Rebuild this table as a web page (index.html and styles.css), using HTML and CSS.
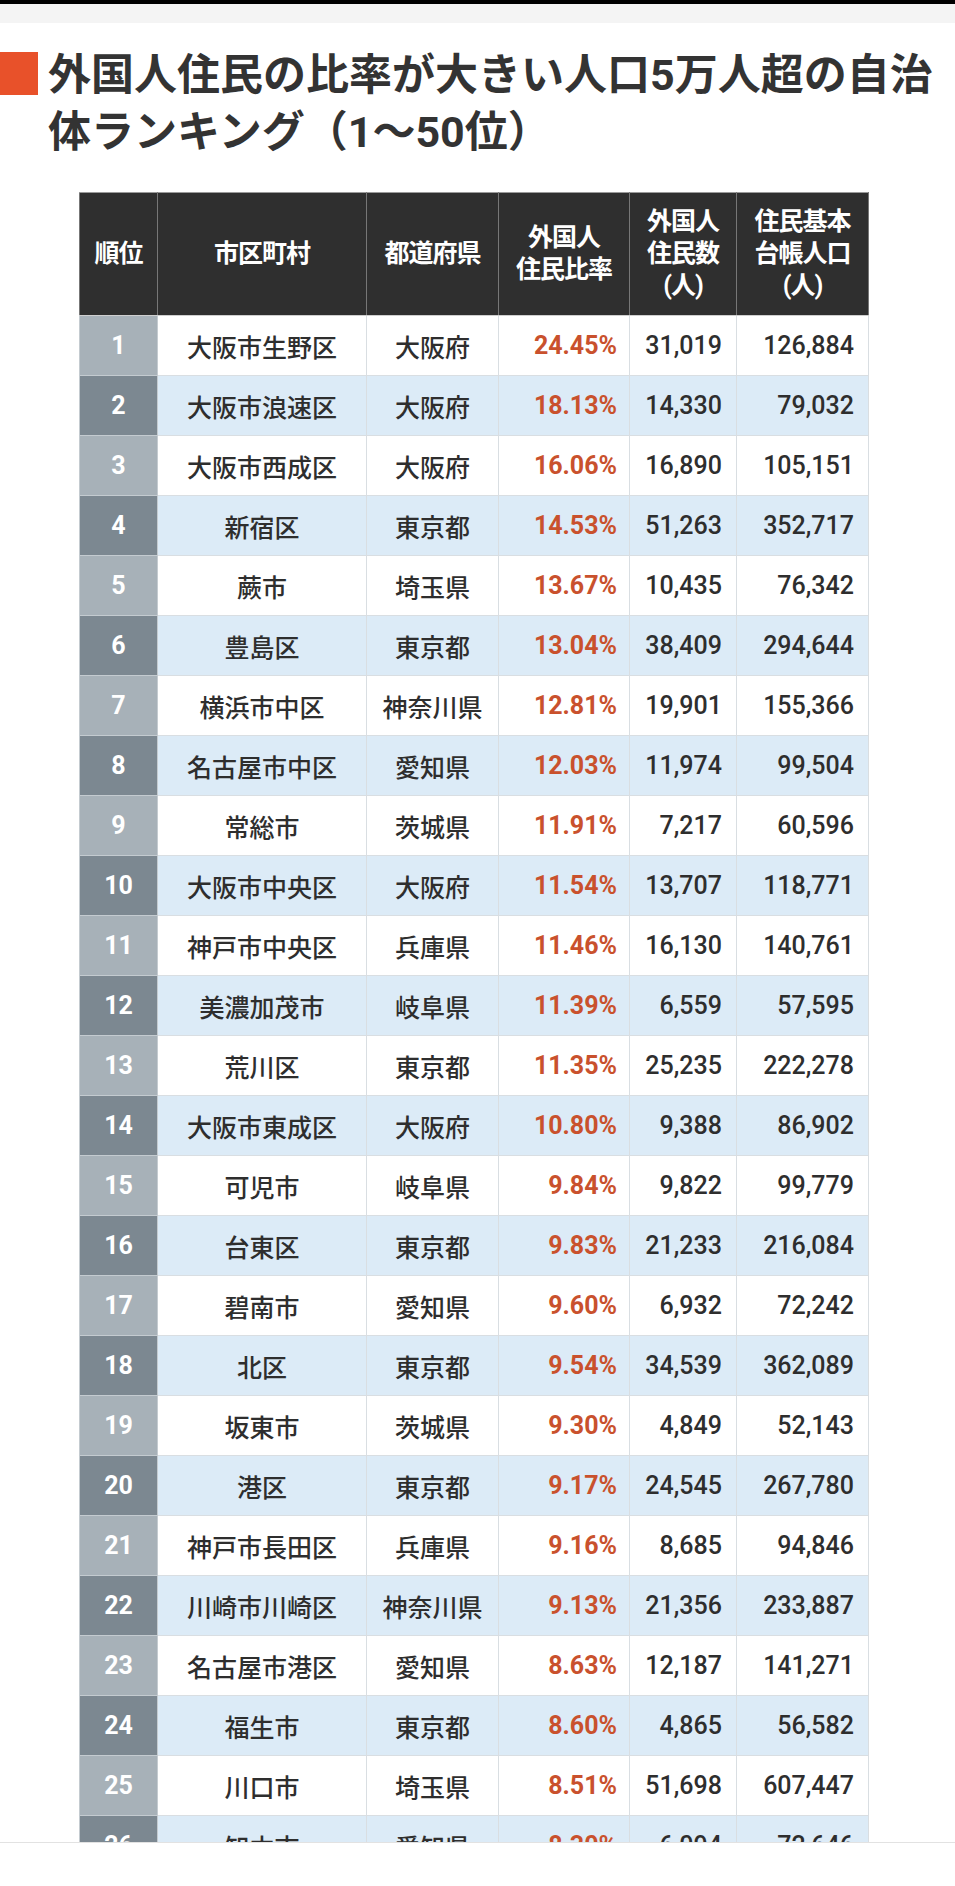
FILE: index.html
```html
<!DOCTYPE html>
<html lang="ja">
<head>
<meta charset="utf-8">
<title>外国人住民の比率が大きい人口5万人超の自治体ランキング</title>
<link rel="stylesheet" href="styles.css">
</head>
<body>
<div class="statusbar"></div>
<div class="topband"></div>
<h1 class="title"><span class="mark"></span><span class="title-text">外国人住民の比率が大きい人口5万人超の自治<br>体ランキング（1〜50位）</span></h1>
<table class="rank">
<colgroup>
<col class="c-rank"><col class="c-city"><col class="c-pref"><col class="c-ratio"><col class="c-num"><col class="c-pop">
</colgroup>
<thead>
<tr><th>順位</th><th>市区町村</th><th>都道府県</th><th>外国人<br>住民比率</th><th>外国人<br>住民数<br>(人)</th><th>住民基本<br>台帳人口<br>(人)</th></tr>
</thead>
<tbody>
<tr><td class="no">1</td><td class="ct">大阪市生野区</td><td class="ct">大阪府</td><td class="pct">24.45%</td><td class="nm">31,019</td><td class="nm">126,884</td></tr>
<tr><td class="no">2</td><td class="ct">大阪市浪速区</td><td class="ct">大阪府</td><td class="pct">18.13%</td><td class="nm">14,330</td><td class="nm">79,032</td></tr>
<tr><td class="no">3</td><td class="ct">大阪市西成区</td><td class="ct">大阪府</td><td class="pct">16.06%</td><td class="nm">16,890</td><td class="nm">105,151</td></tr>
<tr><td class="no">4</td><td class="ct">新宿区</td><td class="ct">東京都</td><td class="pct">14.53%</td><td class="nm">51,263</td><td class="nm">352,717</td></tr>
<tr><td class="no">5</td><td class="ct">蕨市</td><td class="ct">埼玉県</td><td class="pct">13.67%</td><td class="nm">10,435</td><td class="nm">76,342</td></tr>
<tr><td class="no">6</td><td class="ct">豊島区</td><td class="ct">東京都</td><td class="pct">13.04%</td><td class="nm">38,409</td><td class="nm">294,644</td></tr>
<tr><td class="no">7</td><td class="ct">横浜市中区</td><td class="ct">神奈川県</td><td class="pct">12.81%</td><td class="nm">19,901</td><td class="nm">155,366</td></tr>
<tr><td class="no">8</td><td class="ct">名古屋市中区</td><td class="ct">愛知県</td><td class="pct">12.03%</td><td class="nm">11,974</td><td class="nm">99,504</td></tr>
<tr><td class="no">9</td><td class="ct">常総市</td><td class="ct">茨城県</td><td class="pct">11.91%</td><td class="nm">7,217</td><td class="nm">60,596</td></tr>
<tr><td class="no">10</td><td class="ct">大阪市中央区</td><td class="ct">大阪府</td><td class="pct">11.54%</td><td class="nm">13,707</td><td class="nm">118,771</td></tr>
<tr><td class="no">11</td><td class="ct">神戸市中央区</td><td class="ct">兵庫県</td><td class="pct">11.46%</td><td class="nm">16,130</td><td class="nm">140,761</td></tr>
<tr><td class="no">12</td><td class="ct">美濃加茂市</td><td class="ct">岐阜県</td><td class="pct">11.39%</td><td class="nm">6,559</td><td class="nm">57,595</td></tr>
<tr><td class="no">13</td><td class="ct">荒川区</td><td class="ct">東京都</td><td class="pct">11.35%</td><td class="nm">25,235</td><td class="nm">222,278</td></tr>
<tr><td class="no">14</td><td class="ct">大阪市東成区</td><td class="ct">大阪府</td><td class="pct">10.80%</td><td class="nm">9,388</td><td class="nm">86,902</td></tr>
<tr><td class="no">15</td><td class="ct">可児市</td><td class="ct">岐阜県</td><td class="pct">9.84%</td><td class="nm">9,822</td><td class="nm">99,779</td></tr>
<tr><td class="no">16</td><td class="ct">台東区</td><td class="ct">東京都</td><td class="pct">9.83%</td><td class="nm">21,233</td><td class="nm">216,084</td></tr>
<tr><td class="no">17</td><td class="ct">碧南市</td><td class="ct">愛知県</td><td class="pct">9.60%</td><td class="nm">6,932</td><td class="nm">72,242</td></tr>
<tr><td class="no">18</td><td class="ct">北区</td><td class="ct">東京都</td><td class="pct">9.54%</td><td class="nm">34,539</td><td class="nm">362,089</td></tr>
<tr><td class="no">19</td><td class="ct">坂東市</td><td class="ct">茨城県</td><td class="pct">9.30%</td><td class="nm">4,849</td><td class="nm">52,143</td></tr>
<tr><td class="no">20</td><td class="ct">港区</td><td class="ct">東京都</td><td class="pct">9.17%</td><td class="nm">24,545</td><td class="nm">267,780</td></tr>
<tr><td class="no">21</td><td class="ct">神戸市長田区</td><td class="ct">兵庫県</td><td class="pct">9.16%</td><td class="nm">8,685</td><td class="nm">94,846</td></tr>
<tr><td class="no">22</td><td class="ct">川崎市川崎区</td><td class="ct">神奈川県</td><td class="pct">9.13%</td><td class="nm">21,356</td><td class="nm">233,887</td></tr>
<tr><td class="no">23</td><td class="ct">名古屋市港区</td><td class="ct">愛知県</td><td class="pct">8.63%</td><td class="nm">12,187</td><td class="nm">141,271</td></tr>
<tr><td class="no">24</td><td class="ct">福生市</td><td class="ct">東京都</td><td class="pct">8.60%</td><td class="nm">4,865</td><td class="nm">56,582</td></tr>
<tr><td class="no">25</td><td class="ct">川口市</td><td class="ct">埼玉県</td><td class="pct">8.51%</td><td class="nm">51,698</td><td class="nm">607,447</td></tr>
<tr><td class="no">26</td><td class="ct">知立市</td><td class="ct">愛知県</td><td class="pct">8.30%</td><td class="nm">6,094</td><td class="nm">72,646</td></tr>
</tbody>
</table>
<div class="bottombar"></div>
</body>
</html>
```
FILE: styles.css
```css
html, body {
  margin: 0;
  padding: 0;
  background: #ffffff;
}
body {
  font-family: Roboto, "Noto Sans CJK JP", sans-serif;
  color: #333333;
}
.statusbar {
  height: 4px;
  background: #000000;
}
.topband {
  height: 19px;
  background: #f4f4f4;
}
.title {
  display: flex;
  align-items: flex-start;
  margin: 24px 0 0 0;
  font-size: 43px;
  line-height: 57px;
  font-weight: 700;
  color: #333333;
}
.mark {
  flex: none;
  width: 38px;
  height: 43px;
  margin-top: 5px;
  margin-right: 10px;
  background: #e8512a;
}
.title-text {
  display: block;
}
.rank {
  border-collapse: collapse;
  margin: 31px 0 0 79px;
  width: 789px;
  table-layout: fixed;
}
.c-rank { width: 78px; }
.c-city { width: 209px; }
.c-pref { width: 132px; }
.c-ratio { width: 131px; }
.c-num { width: 107px; }
.c-pop { width: 132px; }
.rank th {
  background: #2f2f2f;
  color: #ffffff;
  font-weight: 700;
  font-size: 25px;
  line-height: 32px;
  height: 122px;
  padding: 0;
  text-align: center;
  vertical-align: middle;
  border: 1px solid #777777;
  border-top-color: #9a9a9a;
  border-bottom-color: #cfcfcf;
  letter-spacing: -1px;
}
.rank td {
  height: 59px;
  padding: 0 13px 0 0;
  font-size: 25px;
  font-weight: 500;
  vertical-align: middle;
  border: 1px solid #d9dee2;
  color: #2e2e2e;
}
.rank tbody tr:nth-child(even) td {
  background: #dcebf7;
}
.rank td.no {
  padding: 0;
  text-align: center;
  color: #ffffff;
  font-weight: 700;
  background: #a7b1b8;
  border-color: #c4cbd0;
}
.rank tbody tr:nth-child(even) td.no {
  background: #7c8891;
}
.rank td.ct {
  padding: 0;
  text-align: center;
}
.rank td.pct {
  text-align: right;
  font-weight: 700;
  color: #c9512d;
  padding-right: 12px;
}
.rank td.nm {
  text-align: right;
  padding-right: 14px;
}
.bottombar {
  position: fixed;
  left: 0;
  right: 0;
  bottom: 0;
  height: 43px;
  background: #ffffff;
  border-top: 1px solid #e2e2e2;
}
```
